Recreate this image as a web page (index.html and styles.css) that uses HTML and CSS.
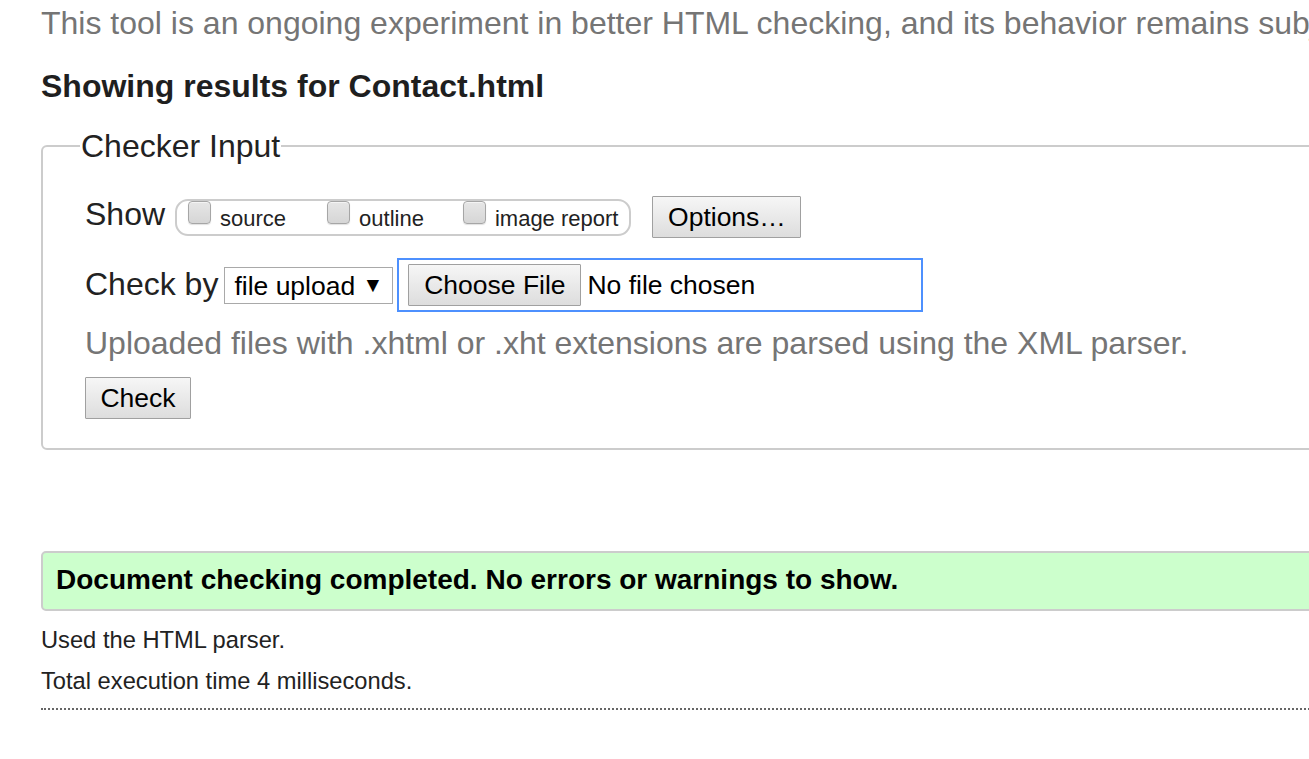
FILE: index.html
```html
<!DOCTYPE html>
<html lang="en">
<head>
<meta charset="utf-8">
<title>Showing results for Contact.html - Nu Html Checker</title>
<link rel="stylesheet" href="styles.css">
</head>
<body>
<div class="page">
  <p class="intro">This tool is an ongoing experiment in better HTML checking, and its behavior remains subject to change</p>
  <h2 class="title">Showing results for Contact.html</h2>
  <fieldset class="checker">
    <legend class="legend">Checker Input</legend>
    <div class="fs-body">
      <div class="row row-show">
        <span class="label label-show">Show</span>
        <div class="group">
          <input type="checkbox" class="cb" id="cb-source">
          <label class="cb-label" for="cb-source">source</label>
          <input type="checkbox" class="cb cb-gap" id="cb-outline">
          <label class="cb-label" for="cb-outline">outline</label>
          <input type="checkbox" class="cb cb-gap2" id="cb-image">
          <label class="cb-label" for="cb-image">image report</label>
        </div>
        <button class="btn btn-options" type="button">Options…</button>
      </div>
      <div class="row row-by">
        <span class="label label-by">Check by</span>
        <span class="select-wrap">
          <select class="select">
            <option>file upload</option>
          </select>
        </span>
        <label class="filebox">
          <input type="file" class="file-hidden">
          <span class="btn btn-file">Choose File</span>
          <span class="file-name">No file chosen</span>
        </label>
      </div>
      <p class="note">Uploaded files with .xhtml or .xht extensions are parsed using the XML parser.</p>
      <button class="btn btn-check" type="button">Check</button>
    </div>
  </fieldset>
  <div class="success">Document checking completed. No errors or warnings to show.</div>
  <p class="stat stat-first">Used the HTML parser.</p>
  <p class="stat">Total execution time 4 milliseconds.</p>
  <hr class="dots">
</div>
</body>
</html>
```

FILE: styles.css
```css
html {
  overflow: hidden;
  background: #fff;
}
body {
  margin: 0;
  padding: 5px 0 0 41px;
  font-family: "Liberation Sans", Arial, sans-serif;
  color: #222;
}
.page {
  width: 1600px;
}
.intro {
  margin: 0;
  font-size: 32px;
  line-height: 36px;
  color: #757575;
  white-space: nowrap;
}
.title {
  margin: 27px 0 24px;
  font-size: 32px;
  line-height: 36px;
  font-weight: bold;
  color: #1f1f1f;
}
.checker {
  margin: 0;
  padding: 0;
  border: 2px solid #cccccc;
  border-radius: 6px;
  min-width: 0;
}
.legend {
  margin-left: 37px;
  padding: 0 1px;
  font-size: 32px;
  line-height: 36px;
  color: #222;
}
.fs-body {
  padding: 32px 0 29px 42px;
}
.row {
  display: flex;
  align-items: flex-start;
}
.row-show {
  height: 42px;
}
.label {
  font-size: 32px;
  line-height: 36px;
  color: #222;
  white-space: nowrap;
}
.label-show {
  margin-right: 10px;
}
.group {
  display: flex;
  align-items: flex-start;
  box-sizing: border-box;
  height: 37px;
  margin-top: 3px;
  padding: 0 11px;
  border: 2px solid #cccccc;
  border-radius: 13px;
}
.cb {
  appearance: none;
  -webkit-appearance: none;
  box-sizing: border-box;
  width: 23px;
  height: 23px;
  margin: 0;
  border: 1px solid #a6a6a6;
  border-radius: 4px;
  background: linear-gradient(#e6e6e6, #d6d6d6);
  box-shadow: inset 0 1px 0 #f4f4f4, 0 1px 1px rgba(0, 0, 0, 0.12);
}
.cb-gap {
  margin-left: 41px;
}
.cb-gap2 {
  margin-left: 39px;
}
.cb-label {
  margin: 5px 0 0 9px;
  font-size: 22px;
  line-height: 26px;
  color: #222;
  white-space: nowrap;
}
.btn {
  box-sizing: border-box;
  height: 42px;
  padding: 0 15px;
  border: 1px solid #a0a0a0;
  border-radius: 1px;
  background: linear-gradient(#f6f6f6, #dddddd);
  font-family: "Liberation Sans", Arial, sans-serif;
  font-size: 26.5px;
  line-height: 40px;
  color: #000;
  display: inline-block;
  white-space: nowrap;
}
.btn-options {
  margin-left: 21px;
  width: 149px;
  padding: 0;
  text-align: center;
}
.row-by {
  margin-top: 20px;
  height: 54px;
}
.label-by {
  margin-top: 8px;
}
.select-wrap {
  position: relative;
  margin: 9px 0 0 6px;
  display: block;
}
.select-wrap::after {
  content: "▼";
  position: absolute;
  right: 10px;
  top: 7px;
  font-size: 21px;
  line-height: 22px;
  color: #000;
  pointer-events: none;
}
.select {
  appearance: none;
  -webkit-appearance: none;
  box-sizing: border-box;
  display: block;
  width: 169px;
  height: 37px;
  margin: 0;
  padding: 0 0 0 9px;
  border: 1px solid #a9a9a9;
  border-radius: 0;
  background: #fff;
  font-family: "Liberation Sans", Arial, sans-serif;
  font-size: 26.5px;
  color: #000;
}
.filebox {
  box-sizing: border-box;
  display: flex;
  align-items: center;
  width: 526px;
  height: 54px;
  margin-left: 4px;
  padding: 0 9px;
  border: 2px solid #4d90fe;
}
.file-hidden {
  display: none;
}
.btn-file {
  width: 173px;
  padding: 0;
  text-align: center;
}
.file-name {
  margin-left: 6px;
  font-size: 26.5px;
  line-height: 30px;
  color: #000;
  white-space: nowrap;
}
.note {
  margin: 13px 0 0;
  font-size: 32px;
  line-height: 36px;
  color: #757575;
  white-space: nowrap;
}
.btn-check {
  display: block;
  margin-top: 16px;
  width: 106px;
  padding: 0;
  text-align: center;
}
.success {
  margin-top: 101px;
  padding: 11px 13px 13px;
  border: 2px solid #cccccc;
  border-radius: 5px;
  background: #ccffcc;
  font-size: 28px;
  line-height: 32px;
  font-weight: bold;
  color: #000;
}
.stat {
  margin: 13px 0 0;
  font-size: 23.7px;
  line-height: 28px;
  color: #222;
}
.stat-first {
  margin-top: 15px;
}
.dots {
  margin: 13px 0 0;
  height: 0;
  border: 0;
  border-top: 2px dotted #666666;
}
```
